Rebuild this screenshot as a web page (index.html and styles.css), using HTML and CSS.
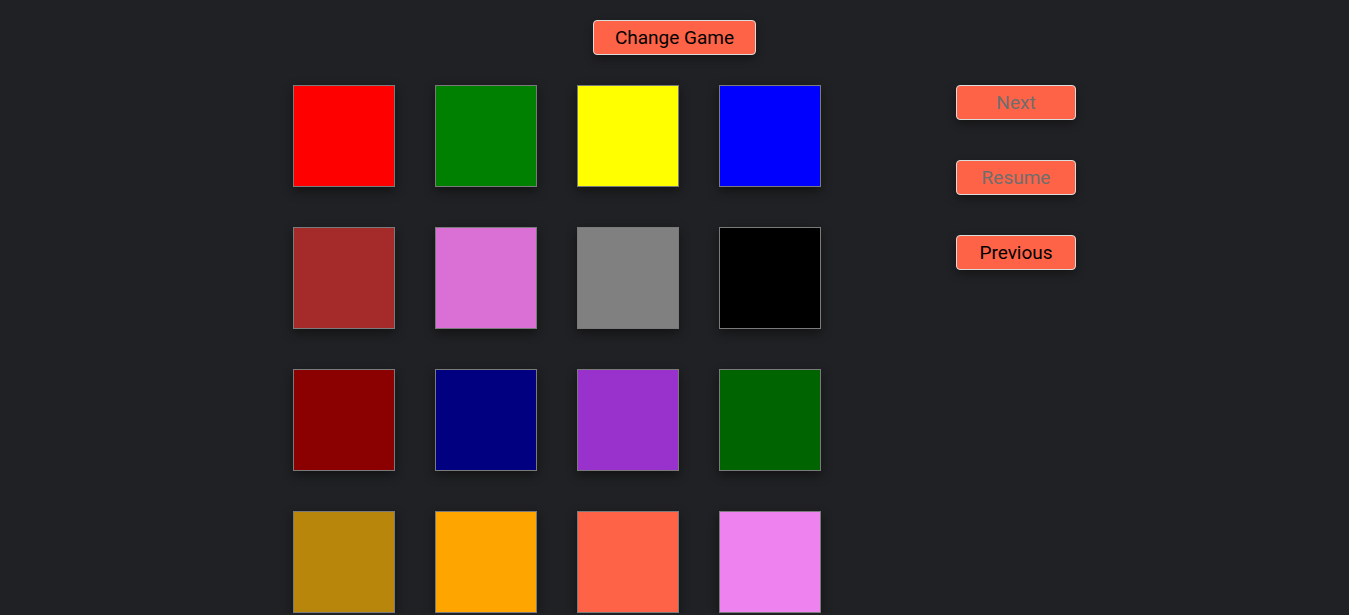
FILE: index.html
```html
<!DOCTYPE html>
<html lang="en">
<head>
<meta charset="utf-8">
<title>Colors</title>
<link rel="stylesheet" href="styles.css">
</head>
<body>
<header class="top">
  <button class="btn btn-wide">Change Game</button>
</header>
<main class="layout">
  <section class="grid">
    <div class="tile red"></div>
    <div class="tile green"></div>
    <div class="tile yellow"></div>
    <div class="tile blue"></div>
    <div class="tile brown"></div>
    <div class="tile orchid"></div>
    <div class="tile gray"></div>
    <div class="tile black"></div>
    <div class="tile darkred"></div>
    <div class="tile navy"></div>
    <div class="tile darkorchid"></div>
    <div class="tile darkgreen"></div>
    <div class="tile goldenrod"></div>
    <div class="tile orange"></div>
    <div class="tile tomato"></div>
    <div class="tile violet"></div>
  </section>
  <aside class="controls">
    <button class="btn btn-side" disabled>Next</button>
    <button class="btn btn-side" disabled>Resume</button>
    <button class="btn btn-side">Previous</button>
  </aside>
</main>
</body>
</html>
```
FILE: styles.css
```css
html, body {
  margin: 0;
  padding: 0;
  overflow: hidden;
}
body {
  background: #202124;
  font-family: Roboto, "Liberation Sans", sans-serif;
}
.top {
  display: flex;
  justify-content: center;
  padding-top: 20px;
}
.btn {
  background: #ff6347;
  color: #000;
  border: 1px solid #dcdcdc;
  border-radius: 4px;
  font-family: Roboto, "Liberation Sans", sans-serif;
  font-size: 19px;
  height: 35px;
  padding: 0;
  box-shadow: 0 4px 8px rgba(0, 0, 0, 0.35);
  cursor: pointer;
}
.btn:disabled {
  color: #6e6e6e;
}
.btn-wide {
  width: 163px;
}
.btn-side {
  width: 120px;
}
.layout {
  display: flex;
  justify-content: center;
  gap: 135px;
  margin-top: 30px;
  padding-left: 20px;
}
.grid {
  display: grid;
  grid-template-columns: repeat(4, 102px);
  grid-auto-rows: 102px;
  gap: 40px;
}
.tile {
  box-sizing: border-box;
  border: 1px solid #7a7a7a;
  box-shadow: 0 4px 10px rgba(0, 0, 0, 0.45);
}
.controls {
  display: flex;
  flex-direction: column;
  gap: 40px;
}
.red { background: #ff0000; }
.green { background: #008000; }
.yellow { background: #ffff00; }
.blue { background: #0000ff; }
.brown { background: #a52a2a; }
.orchid { background: #da70d6; }
.gray { background: #808080; }
.black { background: #000000; }
.darkred { background: #8b0000; }
.navy { background: #000080; }
.darkorchid { background: #9932cc; }
.darkgreen { background: #006400; }
.goldenrod { background: #b8860b; }
.orange { background: #ffa500; }
.tomato { background: #ff6347; }
.violet { background: #ee82ee; }
```
